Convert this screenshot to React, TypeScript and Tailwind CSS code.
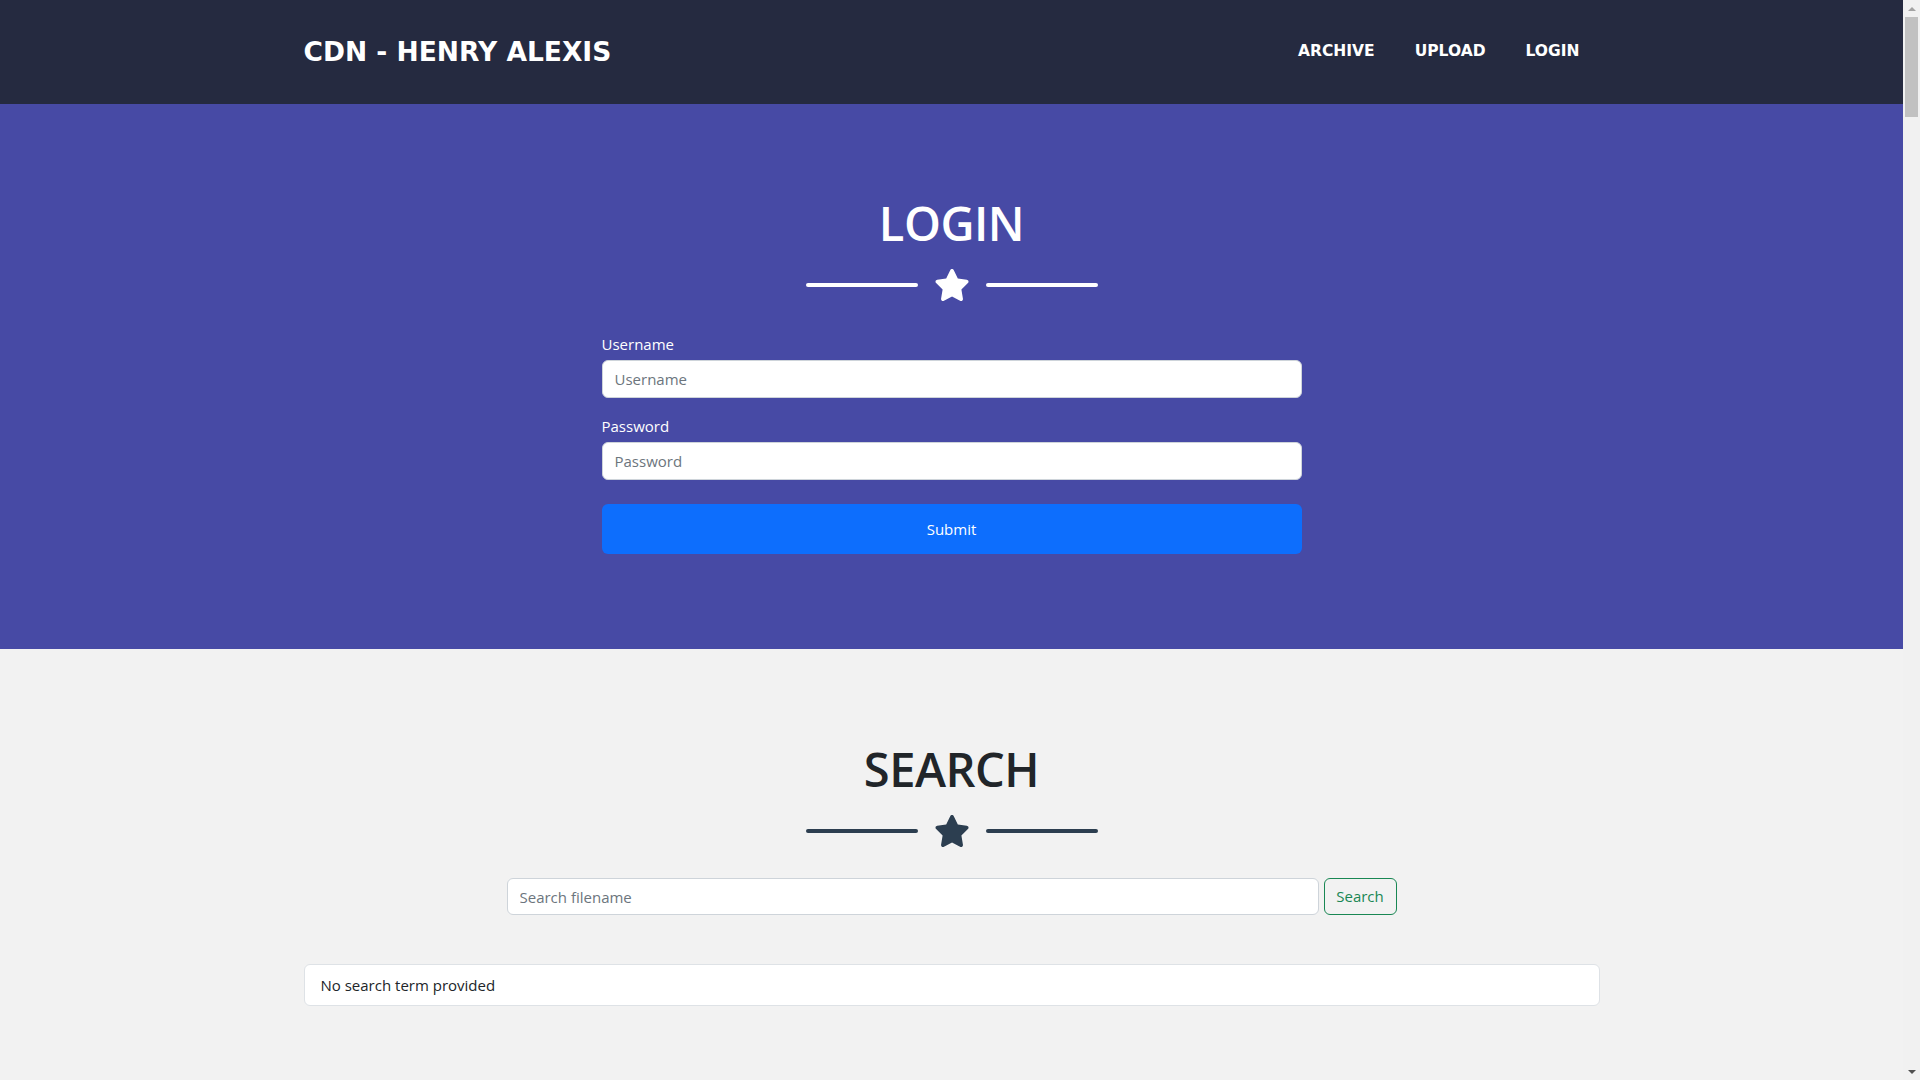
import React from 'react';

const navLinks = ['ARCHIVE', 'UPLOAD', 'LOGIN'];

function Star({ className }: { className?: string }) {
  return (
    <svg viewBox="0 0 576 512" className={className} fill="currentColor" aria-hidden="true">
      <path d="M316.9 18C311.6 7 300.4 0 288.1 0s-23.4 7-28.8 18L195 150.3 51.4 171.5c-12 1.8-22 10.2-25.7 21.7s-.7 24.2 7.9 32.7L137.8 329 113.2 474.7c-2 12 3 24.2 12.9 31.3s23 8 33.8 2.3l128.3-68.5 128.3 68.5c10.8 5.7 23.9 4.9 33.8-2.3s14.9-19.3 12.9-31.3L438.5 329 542.7 225.9c8.6-8.5 11.7-21.2 7.9-32.7s-13.7-19.9-25.7-21.7L381.2 150.3 316.9 18z" />
    </svg>
  );
}

function Divider({ light }: { light?: boolean }) {
  const line = light ? 'bg-white' : 'bg-[#2c3e50]';
  return (
    <div className={`mt-[17px] flex h-8 items-center justify-center ${light ? 'text-white' : 'text-[#2c3e50]'}`}>
      <div className={`h-1 w-[112px] rounded-full ${line}`} />
      <Star className="mx-4 h-8 w-9" />
      <div className={`h-1 w-[112px] rounded-full ${line}`} />
    </div>
  );
}

// fake browser scrollbar so the page keeps the 1903px layout width of the screenshot
function Scrollbar() {
  return (
    <div className="fixed top-0 right-0 flex h-screen w-[17px] flex-col bg-[#f1f1f1]">
      <div className="flex h-[17px] items-center justify-center">
        <div className="h-0 w-0 border-x-[4px] border-b-[4px] border-x-transparent border-b-[#a3a3a3]" />
      </div>
      <div className="mx-[2px] h-[100px] bg-[#c1c1c1]" />
      <div className="flex-1" />
      <div className="flex h-[17px] items-center justify-center">
        <div className="h-0 w-0 border-x-[4px] border-t-[4px] border-x-transparent border-t-[#505050]" />
      </div>
    </div>
  );
}

export default function App() {
  return (
    <div className="min-h-screen bg-[#f2f2f2] font-['Open_Sans',sans-serif] text-[15px] text-[#212529]">
      <div className="w-[1903px] pb-[120px]">
        <nav className="h-[104px] bg-[#252a40]">
          <div className="mx-auto flex h-full w-[1320px] items-center justify-between px-3">
            <a href="#" className="font-['DejaVu_Sans',sans-serif] text-[26.5px] font-bold text-white">
              CDN - HENRY ALEXIS
            </a>
            <ul className="flex">
              {navLinks.map((l) => (
                <li key={l} className="mx-1">
                  <a href="#" className="block px-4 py-2 font-['DejaVu_Sans',sans-serif] text-[15.5px] font-bold text-white">
                    {l}
                  </a>
                </li>
              ))}
            </ul>
          </div>
        </nav>

        <section className="bg-[#474aa5] pt-[90px] pb-[95px]">
          <h2 className="text-center text-[47px] leading-[58px] font-semibold tracking-[-0.5px] text-white">LOGIN</h2>
          <Divider light />
          <form className="mx-auto mt-[31px] w-[700px]" onSubmit={(e) => e.preventDefault()}>
            <label className="mb-1 block leading-6 text-white">Username</label>
            <input
              type="text"
              placeholder="Username"
              className="block h-[38px] w-full rounded-[6px] border border-[#ced4da] bg-white px-3 text-[15px] text-[#212529] outline-none placeholder:text-[#6c757d]"
            />
            <label className="mt-4 mb-1 block leading-6 text-white">Password</label>
            <input
              type="password"
              placeholder="Password"
              className="block h-[38px] w-full rounded-[6px] border border-[#ced4da] bg-white px-3 text-[15px] text-[#212529] outline-none placeholder:text-[#6c757d]"
            />
            <button type="submit" className="mt-6 block h-[50px] w-full rounded-[6px] bg-[#0d6efd] text-[15px] text-white">
              Submit
            </button>
          </form>
        </section>

        <section className="pt-[91px]">
          <h2 className="text-center text-[47px] leading-[58px] font-semibold tracking-[-0.5px] text-[#212529]">SEARCH</h2>
          <Divider />
          <form className="mx-auto mt-[31px] flex w-[890px] gap-[5px]" onSubmit={(e) => e.preventDefault()}>
            <input
              type="text"
              placeholder="Search filename"
              className="h-[37px] flex-1 rounded-[6px] border border-[#ced4da] bg-white px-3 text-[15px] outline-none placeholder:text-[#6c757d]"
            />
            <button type="submit" className="h-[37px] w-[73px] rounded-[6px] border border-[#198754] text-[15px] text-[#198754]">
              Search
            </button>
          </form>
          <div className="mx-auto mt-[49px] w-[1320px] px-3">
            <div className="rounded-[6px] border border-[#dee2e6] bg-white px-4 py-2 leading-6">No search term provided</div>
          </div>
        </section>
      </div>
      <Scrollbar />
    </div>
  );
}
